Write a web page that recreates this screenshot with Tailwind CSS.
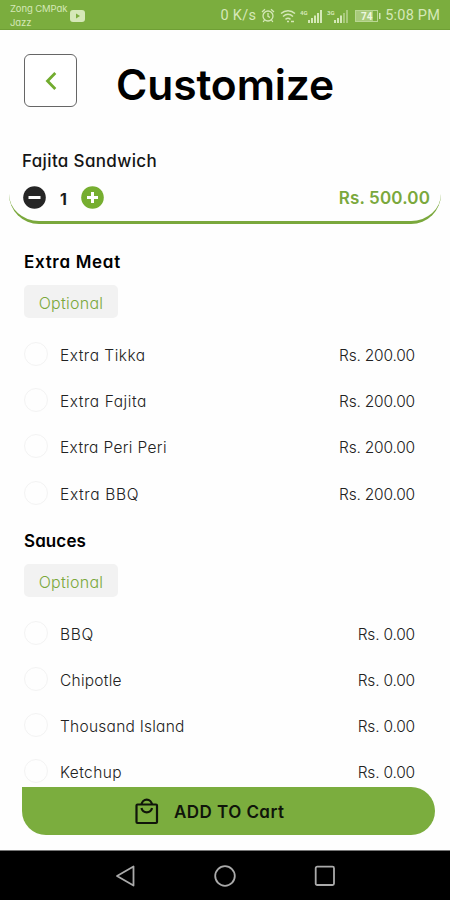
<!DOCTYPE html>
<html lang="en">
<head>
  <meta charset="UTF-8">
  <meta name="viewport" content="width=device-width, initial-scale=1.0">
  <title>Customize</title>
  <script src="https://cdn.jsdelivr.net/npm/@tailwindcss/browser@4"></script>
</head>
<body class="bg-white">
  <div class="w-[450px] h-[900px] flex flex-col overflow-hidden bg-[#fefefe] font-[Inter,sans-serif] [font-feature-settings:'cv11'] text-black whitespace-nowrap">

    <!-- Status bar -->
    <div class="h-[30px] shrink-0 bg-[#7bad3e] flex text-[#d5e8b8] border-b border-[#6f9f35]">
      <div class="pl-[10px] pt-[2px] w-[60px] text-[9.5px] leading-[14px] tracking-[-0.1px]">
        <div>Zong CMPak</div>
        <div>Jazz</div>
      </div>
      <svg class="ml-[10px] mt-[10px]" width="15" height="12" viewBox="0 0 15 12">
        <rect width="15" height="12" rx="3" fill="#d5e8b8"/>
        <path d="M6 3.5v5l4-2.5z" fill="#7bad3e"/>
      </svg>
      <div class="ml-auto pr-[10px] pt-[2px] flex items-center font-[Roboto,sans-serif] text-[14.5px]">
        <span class="tracking-[0.3px]">0 K/s</span>
        <svg class="ml-[5px]" width="14" height="15" viewBox="0 0 14 15" fill="none" stroke="#d5e8b8" stroke-width="1.3">
          <circle cx="7" cy="8" r="5"/>
          <path d="M7 5v3.3l2 1.2M1 4l3-2.7M13 4l-3-2.7M3.5 12l-1.3 2M10.5 12l1.3 2"/>
        </svg>
        <svg class="ml-[5px]" width="16" height="14" viewBox="0 0 16 14" fill="none" stroke="#d5e8b8" stroke-width="1.5">
          <path d="M1 4.5c4-3.6 10-3.6 14 0M3 7.5c3-2.6 7-2.6 10 0M5.5 10.3c1.5-1.2 3.5-1.2 5 0"/>
          <path d="M7 12.5h2M11 12.5h3"/>
        </svg>
        <svg class="ml-[4px]" width="23" height="14" viewBox="0 0 23 14" fill="#d5e8b8">
          <text x="0" y="6" font-size="6" font-weight="700">4G</text>
          <path d="M8 11h2v3h-2zM11 9h2v5h-2zM14 6.5h2v7.5h-2zM17 4h2v10h-2zM20 1h2v13h-2z"/>
        </svg>
        <svg class="ml-[4px]" width="23" height="14" viewBox="0 0 23 14" fill="#d5e8b8">
          <text x="0" y="6" font-size="6" font-weight="700">3G</text>
          <path d="M7 11h2v3h-2zM10 9h2v5h-2zM13 6.5h2v7.5h-2z"/>
          <path d="M16 4h2v10h-2zM19 1h2v13h-2z" opacity=".5"/>
        </svg>
        <svg class="ml-[5px]" width="26" height="12" viewBox="0 0 26 12">
          <rect x=".5" y=".5" width="22" height="11" fill="none" stroke="#d5e8b8" opacity=".7"/>
          <rect x="1" y="1" width="17" height="10" fill="#d5e8b8" opacity=".5"/>
          <path d="M24 3h1.5v6H24z" fill="#d5e8b8"/>
          <text x="6" y="10" font-size="10" font-weight="700" fill="#eef7df">74</text>
        </svg>
        <span class="ml-[4px] tracking-[0.2px]">5:08 PM</span>
      </div>
    </div>

    <!-- Header -->
    <div class="h-[98px] shrink-0 flex pl-[24px] pt-[24px]">
      <div class="size-[53px] rounded-[6px] border border-[#666] bg-white flex items-center justify-center">
        <svg width="12" height="18" viewBox="0 0 12 18" fill="none" stroke="#72ac2f" stroke-width="2.8">
          <path d="M10.3 1L2.5 9l7.8 8"/>
        </svg>
      </div>
      <h1 class="ml-[39px] mt-[3px] text-[42.5px] leading-[56px] font-semibold tracking-[-0.1px]">Customize</h1>
    </div>

    <!-- Product card -->
    <div class="h-[96px] shrink-0 mx-[9px] pl-[13px] pr-[11px] pt-[22px] rounded-[30px] border-b-[3px] border-[#7aa83c]">
      <div class="text-[17px] leading-[23px] font-medium tracking-[0.35px] text-[#151515]">Fajita Sandwich</div>
      <div class="mt-[12px] flex items-center h-[24px]">
        <svg class="ml-[1px]" width="23" height="23" viewBox="0 0 23 23">
          <circle cx="11.5" cy="11.5" r="11.3" fill="#252525"/>
          <rect x="5.5" y="10" width="12" height="3" fill="#fff"/>
        </svg>
        <span class="w-[35px] text-center text-[16px] font-bold text-[#1a1a1a] pt-[3px]">1</span>
        <svg width="23" height="23" viewBox="0 0 23 23">
          <circle cx="11.5" cy="11.5" r="11.3" fill="#76ae30"/>
          <path d="M11.5 6v11M6 11.5h11" stroke="#fff" stroke-width="3"/>
        </svg>
        <span class="ml-auto pt-[4px] text-[17px] font-semibold tracking-[0.15px] text-[#7aa83c]">Rs. 500.00</span>
      </div>
    </div>

    <!-- Option groups -->
    <div class="h-[563px] shrink-0 overflow-hidden pl-[24px] pr-[35px] pt-[27px]">
      <h2 class="text-[17px] leading-[22px] font-semibold tracking-[0.7px]">Extra Meat</h2>
      <div class="mt-[12px] w-[94px] h-[33px] rounded-[5px] bg-[#f2f2f2] flex items-center justify-center pt-[3px] text-[16px] font-light tracking-[0.25px] text-[#7aa83c]">Optional</div>
      <div class="mt-[13px] text-[15.5px] font-light text-[#222]">
        <div class="h-[46.2px] flex items-center">
          <span class="size-[24px] rounded-full border border-[#f3f3f3] mr-[12px]"></span>
          <span class="pt-[3px] tracking-[0.5px]">Extra Tikka</span>
          <span class="ml-auto pt-[3px] tracking-[-0.2px]">Rs. 200.00</span>
        </div>
        <div class="h-[46.2px] flex items-center">
          <span class="size-[24px] rounded-full border border-[#f3f3f3] mr-[12px]"></span>
          <span class="pt-[3px] tracking-[0.55px]">Extra Fajita</span>
          <span class="ml-auto pt-[3px] tracking-[-0.2px]">Rs. 200.00</span>
        </div>
        <div class="h-[46.2px] flex items-center">
          <span class="size-[24px] rounded-full border border-[#f3f3f3] mr-[12px]"></span>
          <span class="pt-[3px] tracking-[0.35px]">Extra Peri Peri</span>
          <span class="ml-auto pt-[3px] tracking-[-0.2px]">Rs. 200.00</span>
        </div>
        <div class="h-[46.2px] flex items-center">
          <span class="size-[24px] rounded-full border border-[#f3f3f3] mr-[12px]"></span>
          <span class="pt-[3px] tracking-[0.65px]">Extra BBQ</span>
          <span class="ml-auto pt-[3px] tracking-[-0.2px]">Rs. 200.00</span>
        </div>
      </div>

      <h2 class="mt-[14px] text-[17px] leading-[22px] font-semibold tracking-[0.1px]">Sauces</h2>
      <div class="mt-[12px] w-[94px] h-[33px] rounded-[5px] bg-[#f2f2f2] flex items-center justify-center pt-[3px] text-[16px] font-light tracking-[0.25px] text-[#7aa83c]">Optional</div>
      <div class="mt-[13px] text-[15.5px] font-light text-[#222]">
        <div class="h-[46.2px] flex items-center">
          <span class="size-[24px] rounded-full border border-[#f3f3f3] mr-[12px]"></span>
          <span class="pt-[3px] tracking-[0.7px]">BBQ</span>
          <span class="ml-auto pt-[3px] tracking-[-0.2px]">Rs. 0.00</span>
        </div>
        <div class="h-[46.2px] flex items-center">
          <span class="size-[24px] rounded-full border border-[#f3f3f3] mr-[12px]"></span>
          <span class="pt-[3px] tracking-[0.25px]">Chipotle</span>
          <span class="ml-auto pt-[3px] tracking-[-0.2px]">Rs. 0.00</span>
        </div>
        <div class="h-[46.2px] flex items-center">
          <span class="size-[24px] rounded-full border border-[#f3f3f3] mr-[12px]"></span>
          <span class="pt-[3px] tracking-[0.25px]">Thousand Island</span>
          <span class="ml-auto pt-[3px] tracking-[-0.2px]">Rs. 0.00</span>
        </div>
        <div class="h-[46.2px] flex items-center">
          <span class="size-[24px] rounded-full border border-[#f3f3f3] mr-[12px]"></span>
          <span class="pt-[3px] tracking-[0.4px]">Ketchup</span>
          <span class="ml-auto pt-[3px] tracking-[-0.2px]">Rs. 0.00</span>
        </div>
      </div>
    </div>

    <!-- Add to cart -->
    <div class="h-[48px] shrink-0 ml-[22px] mr-[15px] pl-[113px] rounded-r-[24px] rounded-bl-[24px] bg-[#7bad3e] flex items-center">
      <svg width="24" height="28" viewBox="0 0 24 28" fill="none" stroke="#10150a" stroke-width="2.2">
        <rect x="1.5" y="7.5" width="20.5" height="18.5" rx="1"/>
        <path d="M6.5 7.500a5.300 5.700 0 0 1 10.500 0M6.500 11a5.300 5 0 0 0 10.500 0"/>
      </svg>
      <span class="ml-[15px] pt-[4px] text-[17px] font-semibold tracking-[0.45px] text-[#10150a]">ADD TO Cart</span>
    </div>

    <!-- Android navigation -->
    <div class="mt-[15px] h-[50px] shrink-0 bg-black border-t border-[#777] flex items-center justify-between pl-[115px] pr-[114px]">
      <svg width="20" height="22" viewBox="0 0 20 22" fill="none" stroke="#aaa" stroke-width="1.8" stroke-linejoin="round">
        <path d="M18.5 1.5v19L2 11z"/>
      </svg>
      <svg width="22" height="22" viewBox="0 0 22 22" fill="none" stroke="#aaa" stroke-width="1.8">
        <circle cx="11" cy="11" r="9.8"/>
      </svg>
      <svg width="22" height="22" viewBox="0 0 22 22" fill="none" stroke="#aaa" stroke-width="1.8">
        <rect x="1.7" y="1.7" width="18.3" height="18.3" rx="1.5"/>
      </svg>
    </div>
  </div>
</body>
</html>
